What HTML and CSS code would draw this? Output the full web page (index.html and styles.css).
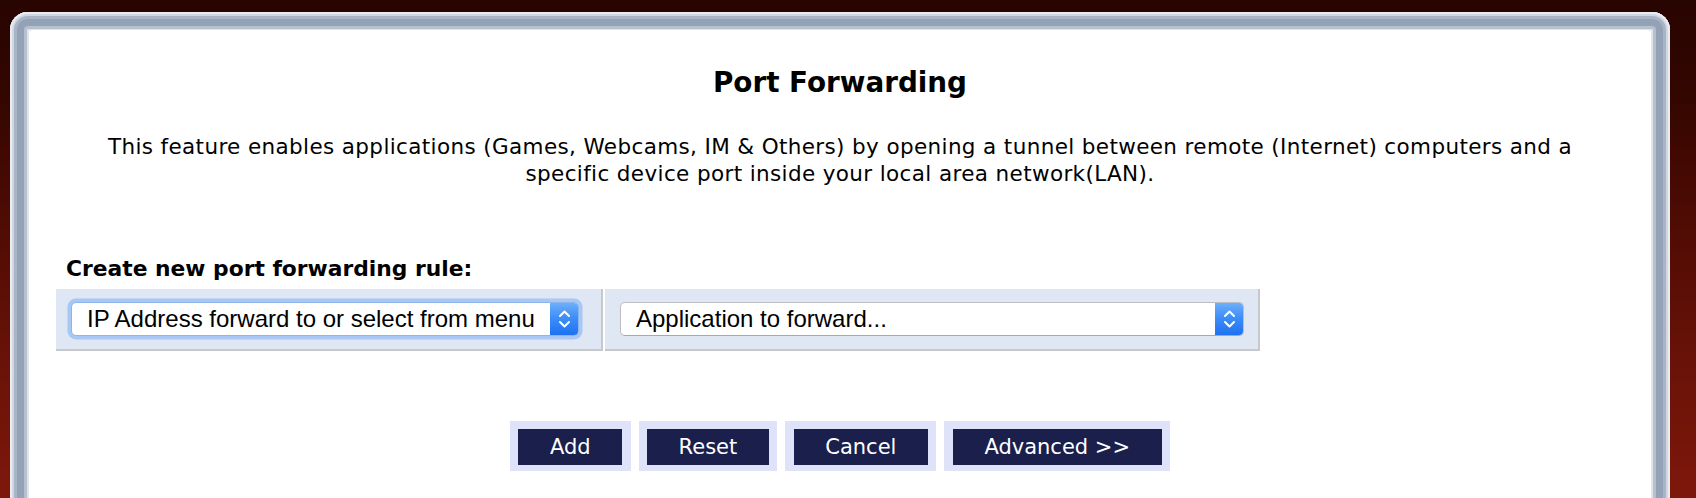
FILE: index.html
```html
<!DOCTYPE html>
<html lang="en">
<head>
<meta charset="utf-8">
<title>Port Forwarding</title>
<link rel="stylesheet" href="styles.css">
</head>
<body>
<div class="frame">
  <div class="panel">
    <h1 class="title">Port Forwarding</h1>
    <p class="desc">This feature enables applications (Games, Webcams, IM &amp; Others) by opening a tunnel between remote (Internet) computers and a<br>specific device port inside your local area network(LAN).</p>

    <div class="rule">
      <div class="rule-label">Create new port forwarding rule:</div>
      <div class="rule-row">
        <div class="cell cell-ip">
          <div class="select select-ip focused">
            <span class="select-text">IP Address forward to or select from menu</span>
            <span class="stepper">
              <svg width="29" height="34" viewBox="0 0 29 34"><path d="M10 14 L14.5 9.5 L19 14 M10 20 L14.5 24.5 L19 20" fill="none" stroke="#fff" stroke-width="2" stroke-linecap="round" stroke-linejoin="round"/></svg>
            </span>
          </div>
        </div>
        <div class="cell cell-app">
          <div class="select select-app">
            <span class="select-text">Application to forward...</span>
            <span class="stepper">
              <svg width="29" height="34" viewBox="0 0 29 34"><path d="M10 14 L14.5 9.5 L19 14 M10 20 L14.5 24.5 L19 20" fill="none" stroke="#fff" stroke-width="2" stroke-linecap="round" stroke-linejoin="round"/></svg>
            </span>
          </div>
        </div>
      </div>
    </div>

    <div class="actions">
      <div class="btn-wrap"><span class="btn">Add</span></div>
      <div class="btn-wrap"><span class="btn">Reset</span></div>
      <div class="btn-wrap"><span class="btn">Cancel</span></div>
      <div class="btn-wrap"><span class="btn">Advanced &gt;&gt;</span></div>
    </div>
  </div>
</div>
</body>
</html>
```

FILE: styles.css
```css
html, body {
  margin: 0;
  padding: 0;
}

body {
  width: 1696px;
  height: 498px;
  overflow: hidden;
  background: linear-gradient(180deg, #280400 0%, #330600 18%, #520c04 48%, #6c1308 76%, #7e170b 100%);
  font-family: "DejaVu Sans", Verdana, sans-serif;
  color: #000;
}

.frame {
  box-sizing: border-box;
  margin: 12px 26px 0 10px;
  height: 540px;
  padding: 18px 19px 0 19px;
  border-radius: 18px 18px 0 0;
  background: #fff;
  box-shadow:
    inset 0 0 0 2px #e9edf2,
    inset 0 0 0 4px #d0d7e1,
    inset 0 0 0 7px #a9b5c6,
    inset 0 0 0 14px #93a2b7,
    inset 0 0 0 17px #b6c0ce,
    inset 0 0 0 19px #e0e5eb;
}

.panel {
  height: 100%;
  background: #fff;
  border-radius: 4px 4px 0 0;
  display: flex;
  flex-direction: column;
}

.title {
  margin: 37px 0 0;
  font-size: 27.8px;
  line-height: 32px;
  font-weight: bold;
  text-align: center;
}

.desc {
  margin: 34px 0 0;
  font-size: 21.5px;
  letter-spacing: 0.37px;
  line-height: 27px;
  text-align: center;
}

.rule {
  margin: 69px 0 0 27px;
  display: flex;
  flex-direction: column;
}

.rule-label {
  margin-left: 10px;
  font-size: 21.8px;
  line-height: 26px;
  font-weight: bold;
}

.rule-row {
  margin-top: 7px;
  display: flex;
  gap: 2px;
}

.cell {
  box-sizing: border-box;
  height: 62px;
  background: #dfe6f4;
  border-right: 2px solid #c6c8cc;
  border-bottom: 2px solid #c6c8cc;
  padding: 13px 0 0 15px;
}

.cell-ip {
  width: 547px;
}

.cell-app {
  width: 655px;
}

.select {
  box-sizing: border-box;
  height: 34px;
  display: flex;
  align-items: center;
  background: #fff;
  border: 1px solid #bcbec3;
  border-bottom-color: #a6a8ad;
  border-radius: 5px;
  font-family: "Liberation Sans", Arial, sans-serif;
  font-size: 24px;
  color: #000;
  overflow: hidden;
}

.select-ip {
  width: 508px;
}

.select-app {
  width: 624px;
}

.focused {
  box-shadow: 0 0 0 3.5px #a7c7f4;
  border-color: #8fb4ea;
}

.select-text {
  flex: 1;
  padding-left: 15px;
  white-space: nowrap;
  line-height: 32px;
}

.stepper {
  width: 29px;
  height: 34px;
  margin: -1px -1px -1px 0;
  display: flex;
  align-items: center;
  justify-content: center;
  background: linear-gradient(180deg, #6fb1fb 0%, #3f8ff8 45%, #1c6ff2 100%);
  border-radius: 0 5px 5px 0;
}

.stepper svg {
  display: block;
}

.actions {
  margin-top: 70px;
  display: flex;
  justify-content: center;
  gap: 8px;
}

.btn-wrap {
  background: #dfe3fa;
  padding: 8px 8.5px 6px;
}

.btn {
  display: block;
  height: 36px;
  padding: 0 31.5px;
  background: #1a1f4c;
  color: #fff;
  font-size: 21px;
  line-height: 36px;
  white-space: nowrap;
}
```
